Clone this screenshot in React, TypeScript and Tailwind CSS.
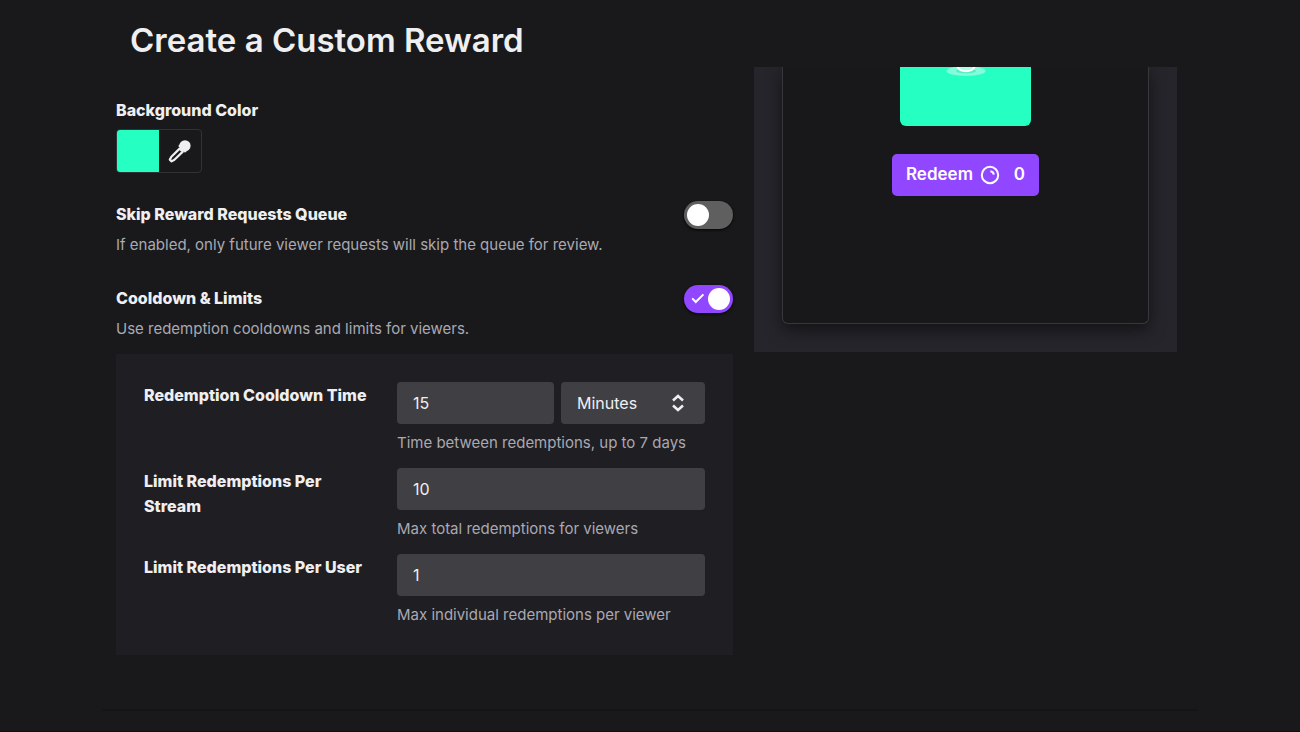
import { useState, type ReactNode } from "react";

function Toggle({ id, checked, onChange }: { id: string; checked: boolean; onChange: (value: boolean) => void }) {
  return (
    <span className="relative block h-7 w-[49px] shrink-0">
      <input
        id={id}
        type="checkbox"
        role="switch"
        checked={checked}
        onChange={(e) => onChange(e.target.checked)}
        className="peer block h-7 w-[49px] cursor-pointer appearance-none rounded-full bg-[#5f5f60] shadow-[0_1px_3px_rgba(0,0,0,0.9)] checked:bg-[#9147ff]"
      />
      <span className="pointer-events-none absolute top-[3px] left-[3px] size-[22px] rounded-full bg-white peer-checked:left-6" />
      <svg
        viewBox="0 0 14 14"
        fill="none"
        stroke="white"
        strokeWidth="2"
        className="pointer-events-none absolute top-[7px] left-[7px] hidden size-3.5 peer-checked:block"
        aria-hidden="true"
      >
        <path d="M1.2 6.4 4.8 10 12.4 2.4" />
      </svg>
    </span>
  );
}

function ToggleSetting(props: {
  id: string;
  label: string;
  description: string;
  checked: boolean;
  onChange: (value: boolean) => void;
}) {
  return (
    <div className="flex items-start justify-between gap-4">
      <div>
        <label htmlFor={props.id} className="block pt-px text-base leading-[25px] font-extrabold">
          {props.label}
        </label>
        <p className="mt-1.5 text-[15px] leading-6 text-[#a9a9b2]">{props.description}</p>
      </div>
      <Toggle id={props.id} checked={props.checked} onChange={props.onChange} />
    </div>
  );
}

function LimitRow({ id, label, hint, children }: { id: string; label: string; hint: string; children: ReactNode }) {
  return (
    <div className="flex gap-5">
      <label htmlFor={id} className="w-[233px] shrink-0 pt-px text-base leading-[25px] font-extrabold">
        {label}
      </label>
      <div className="min-w-0 flex-1">
        <div className="flex gap-[7px]">{children}</div>
        <p className="mt-[7px] text-[15px] leading-6 text-[#a9a9b2]">{hint}</p>
      </div>
    </div>
  );
}

const fieldClass = "h-[42px] min-w-0 rounded bg-[#403f44] px-4 text-base text-[#efeff1] outline-none focus:ring-2 focus:ring-[#9147ff]";

export default function App() {
  const [skipQueue, setSkipQueue] = useState(false);
  const [limits, setLimits] = useState(true);

  return (
    <div className="flex min-h-screen flex-col border-b border-[#120e12] bg-[#19191b] font-['Inter',sans-serif] text-[#efeff1]">
      <div className="mx-auto flex w-full max-w-[1096px] flex-1 flex-col">
        <header className="px-7 pt-[18px] pb-[5px]">
          <h1 className="text-[33px] leading-[44px] font-semibold">Create a Custom Reward</h1>
        </header>

        <main className="flex flex-1 items-start gap-[21px] border-b-2 border-[#151517] pr-[21px] pb-[54px] pl-3.5">
          <form className="min-w-0 flex-1 pt-[31px]" onSubmit={(e) => e.preventDefault()}>
            <h2 className="text-base leading-[25px] font-extrabold">Background Color</h2>
            <div className="mt-1.5 flex h-11 w-[86px] overflow-hidden rounded border border-[#323236]">
              <span className="flex-1 bg-[#26ffc2]" />
              <button type="button" aria-label="Pick a color" className="flex flex-1 items-center justify-center">
                <svg viewBox="0 0 24 24" className="size-6" aria-hidden="true">
                  <path
                    d="M11.6 9.6 3.4 17.8 1.8 20.6 3.6 22.4 6.4 20.8 14.8 12.6Z"
                    fill="none"
                    stroke="#efeff1"
                    strokeWidth="2.2"
                    strokeLinejoin="round"
                  />
                  <circle cx="17" cy="6.8" r="5.6" fill="#efeff1" />
                  <path d="M10.2 7 12.2 5 19 11.8 17 13.8Z" fill="#efeff1" />
                </svg>
              </button>
            </div>

            <div className="mt-7">
              <ToggleSetting
                id="skip-queue"
                label="Skip Reward Requests Queue"
                description="If enabled, only future viewer requests will skip the queue for review."
                checked={skipQueue}
                onChange={setSkipQueue}
              />
            </div>
            <div className="mt-7">
              <ToggleSetting
                id="limits"
                label="Cooldown & Limits"
                description="Use redemption cooldowns and limits for viewers."
                checked={limits}
                onChange={setLimits}
              />
            </div>

            <div className="mt-[13px] flex flex-col gap-[13px] bg-[#1f1e23] p-7">
              <LimitRow id="cooldown" label="Redemption Cooldown Time" hint="Time between redemptions, up to 7 days">
                <input id="cooldown" type="text" inputMode="numeric" defaultValue="15" className={`${fieldClass} flex-1`} />
                <span className="relative block w-36">
                  <select aria-label="Cooldown unit" defaultValue="Minutes" className={`${fieldClass} w-full appearance-none`}>
                    <option>Seconds</option>
                    <option>Minutes</option>
                    <option>Hours</option>
                    <option>Days</option>
                  </select>
                  <svg
                    viewBox="0 0 14 20"
                    fill="none"
                    stroke="#efeff1"
                    strokeWidth="2.6"
                    className="pointer-events-none absolute top-[11px] right-5 h-5 w-3.5"
                    aria-hidden="true"
                  >
                    <path d="M2 7.4 7 3 12 7.4M2 12.6 7 17 12 12.6" />
                  </svg>
                </span>
              </LimitRow>
              <LimitRow id="per-stream" label="Limit Redemptions Per Stream" hint="Max total redemptions for viewers">
                <input id="per-stream" type="text" inputMode="numeric" defaultValue="10" className={`${fieldClass} w-full`} />
              </LimitRow>
              <LimitRow id="per-user" label="Limit Redemptions Per User" hint="Max individual redemptions per viewer">
                <input id="per-user" type="text" inputMode="numeric" defaultValue="1" className={`${fieldClass} w-full`} />
              </LimitRow>
            </div>
          </form>

          <aside className="w-[423px] shrink-0 overflow-hidden bg-[#26252b] px-7 pb-7">
            <div className="flex h-[257px] flex-col items-center rounded-b-md border border-t-0 border-[#38383c] bg-[#18181a] shadow-[0_6px_16px_rgba(0,0,0,0.5)]">
              <div className="flex h-[59px] w-[131px] justify-center rounded-b-md bg-[#26ffc2]">
                <svg viewBox="0 0 40 10" className="h-2.5 w-10" aria-hidden="true">
                  <ellipse cx="20" cy="4" rx="19.5" ry="5" fill="#84fcdb" />
                  <ellipse cx="20" cy="4" rx="10" ry="2.4" fill="#52f0c2" />
                  <path d="M11 -1 Q13 4.2 20 4.2 T29 -1" fill="#a8ffe6" stroke="white" strokeWidth="2" />
                </svg>
              </div>
              <button
                type="button"
                className="mt-7 flex h-[42px] w-[147px] items-center rounded-[5px] bg-[#9147ff] px-3.5 text-[17px] font-semibold text-white"
              >
                <span className="flex-1 text-left">Redeem</span>
                <svg viewBox="0 0 20 20" fill="none" stroke="white" strokeWidth="2" className="mr-3.5 size-5" aria-hidden="true">
                  <circle cx="10" cy="10" r="8.2" />
                  <path d="M10.4 6.2A4 4 0 0 1 13.8 9.6" />
                </svg>
                <span>0</span>
              </button>
            </div>
          </aside>
        </main>
        <div className="h-5" />
      </div>
    </div>
  );
}
